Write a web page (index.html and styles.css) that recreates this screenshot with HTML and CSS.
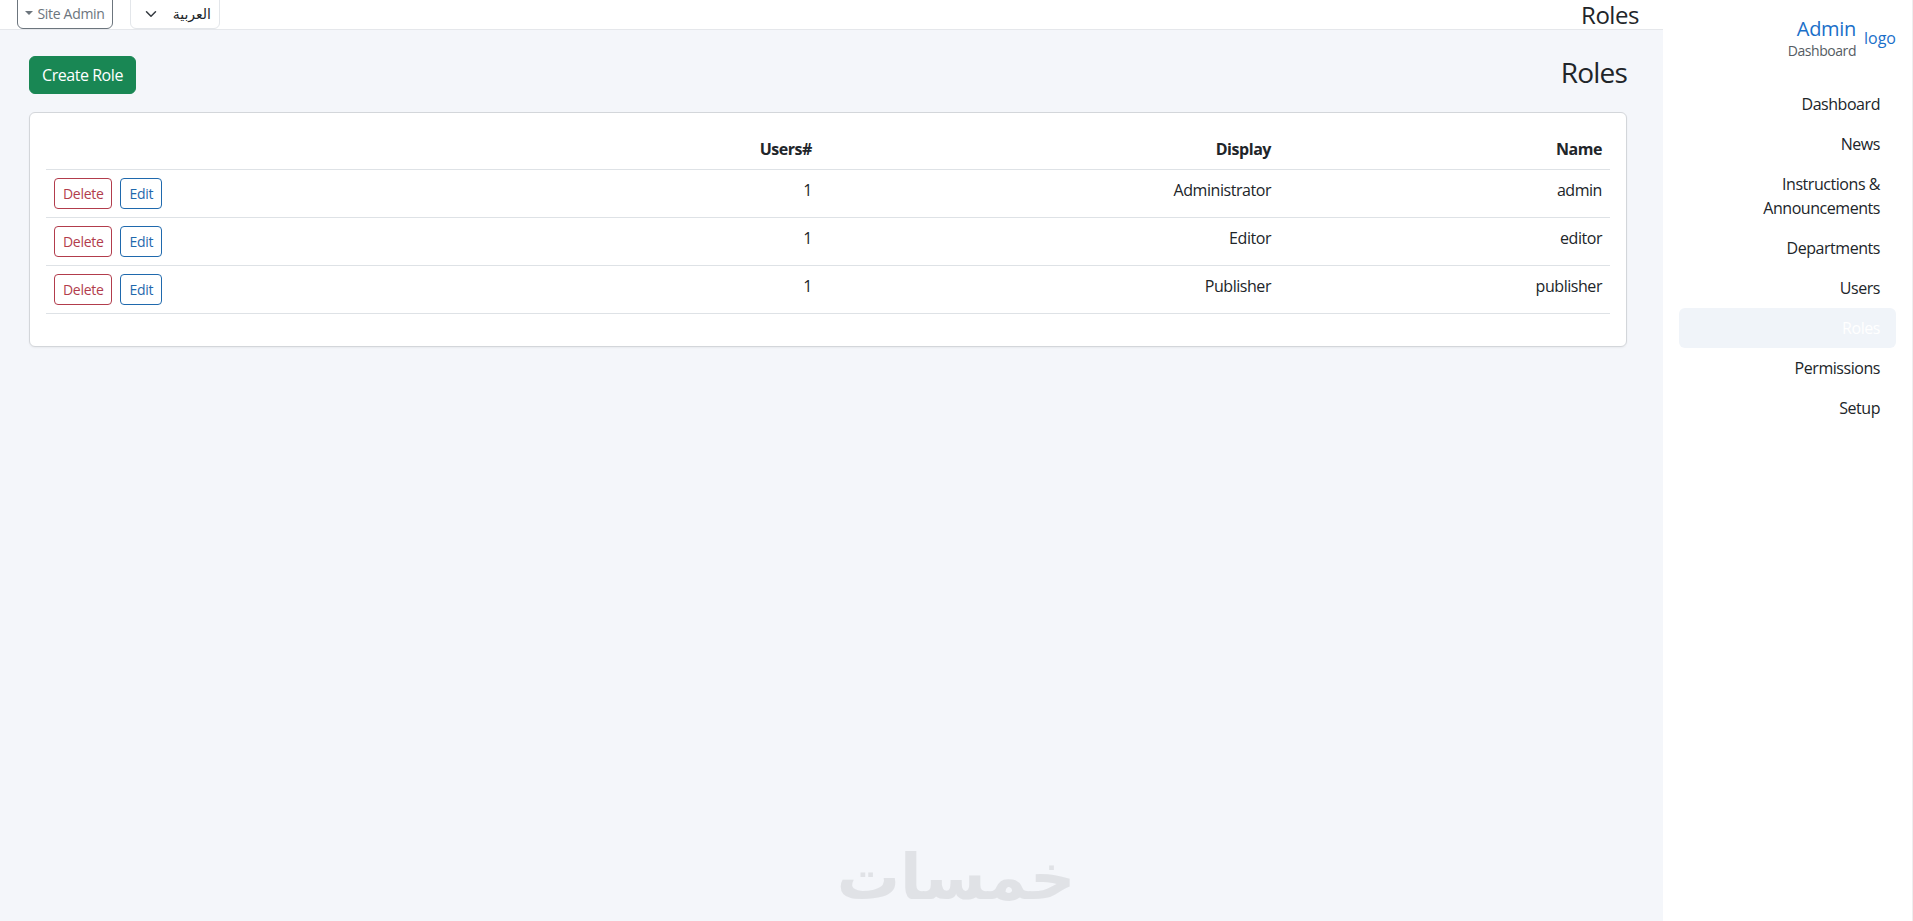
FILE: index.html
```html
<!DOCTYPE html>
<html lang="en" dir="rtl">
<head>
    <meta charset="UTF-8">
    <meta name="viewport" content="width=device-width, initial-scale=1.0">
    <title>Roles</title>
    <link rel="stylesheet" href="styles.css">
</head>
<body>

<aside class="sidebar">
    <div class="brand">
        <a class="brand-logo" href="#">logo</a>
        <div class="brand-text">
            <a class="brand-name" href="#">Admin</a>
            <span class="brand-sub">Dashboard</span>
        </div>
    </div>
    <nav class="side-nav">
        <a href="#">Dashboard</a>
        <a href="#">News</a>
        <a href="#">Instructions &amp; Announcements</a>
        <a href="#">Departments</a>
        <a href="#">Users</a>
        <a href="#" class="active">Roles</a>
        <a href="#">Permissions</a>
        <a href="#">Setup</a>
    </nav>
</aside>

<main class="main">
    <header class="topbar">
        <span class="topbar-title">Roles</span>
        <div class="topbar-tools">
            <div class="lang-select">
                <span>العربية</span>
                <svg width="12" height="12" viewBox="0 0 16 16" fill="none" stroke="#343a40" stroke-width="2" stroke-linecap="round" stroke-linejoin="round"><path d="M2 5l6 6 6-6"/></svg>
            </div>
            <button class="btn-user"><span>Site Admin</span><i class="caret"></i></button>
        </div>
    </header>

    <section class="content">
        <div class="page-head">
            <h2>Roles</h2>
            <a class="btn-create" href="#">Create Role</a>
        </div>

        <div class="card">
            <table class="roles-table">
                <colgroup>
                    <col class="col-name">
                    <col class="col-display">
                    <col class="col-users">
                    <col>
                </colgroup>
                <thead>
                    <tr><th>Name</th><th>Display</th><th>#Users</th><th></th></tr>
                </thead>
                <tbody>
                    <tr>
                        <td>admin</td><td>Administrator</td><td>1</td>
                        <td><div class="row-actions"><a class="btn-sm btn-edit" href="#">Edit</a><a class="btn-sm btn-delete" href="#">Delete</a></div></td>
                    </tr>
                    <tr>
                        <td>editor</td><td>Editor</td><td>1</td>
                        <td><div class="row-actions"><a class="btn-sm btn-edit" href="#">Edit</a><a class="btn-sm btn-delete" href="#">Delete</a></div></td>
                    </tr>
                    <tr>
                        <td>publisher</td><td>Publisher</td><td>1</td>
                        <td><div class="row-actions"><a class="btn-sm btn-edit" href="#">Edit</a><a class="btn-sm btn-delete" href="#">Delete</a></div></td>
                    </tr>
                </tbody>
            </table>
        </div>
    </section>

    <div class="watermark">خمسات</div>
</main>

</body>
</html>
```

FILE: styles.css
```css
* {
    box-sizing: border-box;
}
body {
    font-family: "Open Sans", "DejaVu Sans", sans-serif;
    font-size: 16px;
    line-height: 24px;
    letter-spacing: -0.45px;
    color: #212529;
    background-color: #f4f6fa;
    margin: 0;
    height: 100vh;
    overflow: hidden;
    display: flex;
}
a {
    text-decoration: none;
}

/* sidebar */
.sidebar {
    width: 250px;
    flex-shrink: 0;
    background-color: #ffffff;
    border-right: 1px solid #eeeeee;
    padding: 0 16px;
}
.brand {
    height: 70px;
    display: flex;
    align-items: center;
    justify-content: flex-start;
    gap: 8px;
    padding-top: 3px;
}
.brand-logo {
    color: #1a6fc9;
    letter-spacing: 0;
    padding-top: 2px;
}
.brand-text {
    display: flex;
    flex-direction: column;
}
.brand-name {
    color: #1a6fc9;
    font-size: 20px;
    line-height: 28px;
    letter-spacing: -0.3px;
}
.brand-sub {
    color: #555c63;
    font-size: 14px;
    line-height: 15px;
}
.side-nav {
    display: flex;
    flex-direction: column;
    margin-top: 14px;
}
.side-nav a {
    color: #212529;
    padding: 8px 16px;
    border-radius: 6px;
}
.side-nav a.active {
    background-color: #f0f4f9;
    color: #ffffff;
}

/* main area */
.main {
    flex: 1;
    min-width: 0;
    position: relative;
}
.topbar {
    height: 30px;
    background-color: #ffffff;
    border-bottom: 1px solid #e5e7eb;
    padding: 0 24px 0 17px;
    display: flex;
    align-items: flex-end;
    justify-content: space-between;
}
.topbar-title {
    font-size: 24px;
    line-height: 29px;
}
.topbar-tools {
    display: flex;
    align-items: flex-end;
    gap: 17px;
}
.lang-select {
    width: 90px;
    height: 36px;
    background-color: #ffffff;
    border: 1px solid #e3e6ea;
    border-radius: 6px;
    padding: 0 8px 2px 14px;
    font-size: 14px;
    display: flex;
    align-items: flex-end;
    justify-content: space-between;
}
.lang-select svg {
    margin-bottom: 6px;
}
.btn-user {
    width: 96px;
    height: 36px;
    background-color: #ffffff;
    border: 1px solid #6c757d;
    border-radius: 6px;
    color: #6c757d;
    font: inherit;
    font-size: 14px;
    letter-spacing: -0.3px;
    white-space: nowrap;
    padding: 0 6px 2px;
    display: flex;
    align-items: flex-end;
    justify-content: center;
    gap: 4px;
}
.caret {
    width: 0;
    height: 0;
    border-top: 4px solid #6c757d;
    border-left: 4px solid transparent;
    border-right: 4px solid transparent;
    margin-bottom: 11px;
}

.content {
    padding: 26px 36px 0 29px;
}
.page-head {
    display: flex;
    justify-content: space-between;
    align-items: flex-start;
    margin-bottom: 18px;
}
.page-head h2 {
    margin: 0;
    font-size: 28px;
    font-weight: 400;
    line-height: 32px;
    letter-spacing: -0.8px;
}
.btn-create {
    background-color: #198754;
    color: #ffffff;
    height: 38px;
    padding: 6px 12px;
    border: 1px solid #198754;
    border-radius: 6px;
}
.card {
    background-color: #ffffff;
    border: 1px solid #d3d6da;
    border-radius: 6px;
    padding: 16px;
    box-shadow: 0 1px 2px rgba(0, 0, 0, 0.05);
}
.roles-table {
    width: 100%;
    table-layout: fixed;
    border-collapse: collapse;
    margin-bottom: 16px;
}
.col-name {
    width: 331px;
}
.col-display {
    width: 459px;
}
.col-users {
    width: 460px;
}
.roles-table th,
.roles-table td {
    text-align: right;
    vertical-align: top;
    padding: 8px;
    border-bottom: 1px solid #dee2e6;
}
.row-actions {
    display: flex;
    justify-content: flex-end;
    gap: 8px;
}
.btn-sm {
    font-size: 14px;
    line-height: 21px;
    letter-spacing: -0.3px;
    padding: 4px 8px;
    border: 1px solid;
    border-radius: 4px;
}
.btn-edit {
    color: #1f69ad;
    border-color: #1f69ad;
}
.btn-delete {
    color: #b23c4c;
    border-color: #b23c4c;
}

/* watermark over the bottom of the page */
.watermark {
    position: absolute;
    bottom: 8px;
    left: 836px;
    width: 240px;
    text-align: center;
    font-family: "DejaVu Sans", sans-serif;
    font-size: 63px;
    line-height: 70px;
    font-weight: 700;
    letter-spacing: 0;
    color: #e0e2e6;
}
```
